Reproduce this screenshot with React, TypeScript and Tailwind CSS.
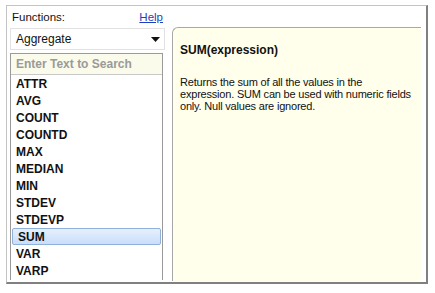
import React from "react";

const items = ["ATTR", "AVG", "COUNT", "COUNTD", "MAX", "MEDIAN", "MIN", "STDEV", "STDEVP", "SUM", "VAR", "VARP"];

export default function App() {
  return (
    <div className="w-[435px] h-[293px] bg-white pt-[5px] pl-[6px]" style={{ fontFamily: "'Liberation Sans', Arial, sans-serif" }}>
      <div className="w-[422px] h-[279px] border-l border-t border-l-[#c4c4c4] border-t-[#c4c4c4] border-r-2 border-b-2 border-r-[#808080] border-b-[#808080] bg-white flex pl-[3px] pt-[4px]">
        {/* left column */}
        <div className="w-[155px] flex flex-col">
          <div className="flex justify-between items-center h-[16px] pl-[2px] pr-[2px] text-[11.5px] text-[#111]">
            <span>Functions:</span>
            <span className="text-[#1c3fbf] underline">Help</span>
          </div>
          <div className="mt-[2px] h-[22px] border border-[#e2e2e2] flex items-center justify-between pl-[5px] pr-[4px] text-[12px] text-[#111]">
            <span>Aggregate</span>
            <svg width="9" height="5" viewBox="0 0 9 5"><path d="M0 0h9L4.5 5z" fill="#111" /></svg>
          </div>
          <div className="mt-[3px] w-[153px] h-[227px] border-l border-t border-[#9a9a9a] border-r border-r-[#9a9a9a] flex flex-col">
            <div className="h-[21px] bg-[#fbfbeb] border-b border-[#c8c8c8] flex items-center pl-[5px] text-[12px] font-bold text-[#9a9a9a]">
              Enter Text to Search
            </div>
            <div className="flex flex-col">
              {items.map((it) => (
                <div
                  key={it}
                  className={
                    "h-[17px] flex items-center pl-[5px] text-[12px] font-bold text-[#111] " +
                    (it === "SUM" ? "mx-[1px] pl-[4px] border border-[#8fb2dc] rounded-[2px] bg-gradient-to-b from-[#e6f0fc] to-[#c9defa]" : "")
                  }
                >
                  {it}
                </div>
              ))}
            </div>
          </div>
        </div>
        {/* description panel */}
        <div className="ml-[7px] mt-[17px] w-[249px] h-[254px] bg-[#ffffec] border-l border-t border-[#a8a8a8] rounded-tl-[6px] pl-[7px] pr-[2px] pt-[13px] text-[11px] text-[#111]">
          <div className="font-bold text-[12px]">SUM(expression)</div>
          <div className="mt-[17px] leading-[12px] whitespace-nowrap tracking-[-0.2px]">
            Returns the sum of all the values in the<br />
            expression. SUM can be used with numeric fields<br />
            only. Null values are ignored.
          </div>
        </div>
      </div>
    </div>
  );
}
